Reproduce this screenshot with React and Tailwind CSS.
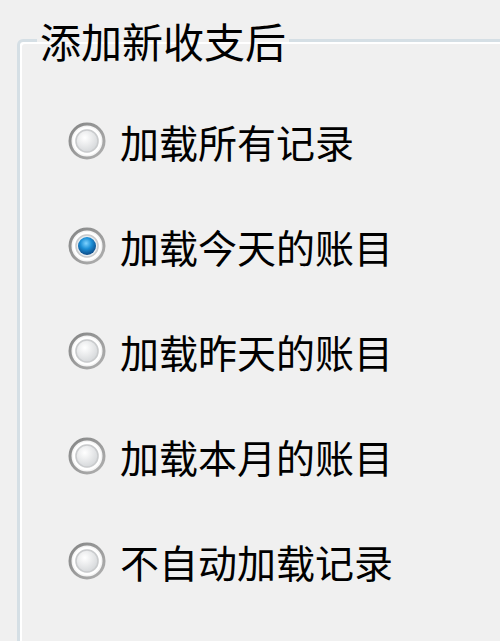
import { useState } from "react";

const options = [
  "加载所有记录",
  "加载今天的账目",
  "加载昨天的账目",
  "加载本月的账目",
  "不自动加载记录",
];

function Radio({ checked }) {
  return (
    <svg width="38" height="38" viewBox="0 0 38 38" className="shrink-0">
      <defs>
        <linearGradient id="ring" x1="0" y1="0" x2="1" y2="1">
          <stop offset="0" stopColor="#858686" />
          <stop offset="1" stopColor="#b0b0b0" />
        </linearGradient>
        <radialGradient id="face" cx="0.4" cy="0.35" r="0.8">
          <stop offset="0" stopColor="#ffffff" />
          <stop offset="1" stopColor="#cdd0d3" />
        </radialGradient>
        <radialGradient id="dot" cx="0.45" cy="0.35" r="0.7">
          <stop offset="0" stopColor="#7fd3ff" />
          <stop offset="0.45" stopColor="#1c8fd6" />
          <stop offset="1" stopColor="#0a3f7a" />
        </radialGradient>
      </defs>
      <circle cx="19" cy="19" r="17" fill="#f4f4f4" stroke="url(#ring)" strokeWidth="3" />
      <circle cx="19" cy="19" r="13" fill="none" stroke="#ffffff" strokeWidth="2" />
      <circle cx="19" cy="19" r="11" fill={checked ? "#e9eef2" : "url(#face)"} stroke="#c9cbcd" strokeWidth="1.5" />
      {checked && <circle cx="19" cy="19" r="9" fill="url(#dot)" />}
    </svg>
  );
}

export default function App() {
  const [selected, setSelected] = useState(1);

  return (
    <div
      className="w-[500px] h-[641px] overflow-hidden bg-[#f0f0f0] text-black pt-[20px]"
      style={{ fontFamily: '"Noto Sans CJK SC", "Noto Sans", sans-serif' }}
    >
      <fieldset className="ml-[17px] w-[520px] h-[680px] border-[3px] border-[#d5dfe5] rounded-tl-[6px] shadow-[inset_2px_2px_0_#ffffff] p-0">
        <legend className="ml-[17px] px-[3px] text-[41px] leading-[40px]">
          添加新收支后
        </legend>
        <div className="flex flex-col gap-[67px] pl-[48px] pt-[62px]">
          {options.map((label, i) => (
            <label
              key={label}
              className="flex items-center gap-[14px] h-[38px] cursor-default"
              onClick={() => setSelected(i)}
            >
              <Radio checked={selected === i} />
              <span className="text-[39px] leading-[38px]">{label}</span>
            </label>
          ))}
        </div>
      </fieldset>
    </div>
  );
}
